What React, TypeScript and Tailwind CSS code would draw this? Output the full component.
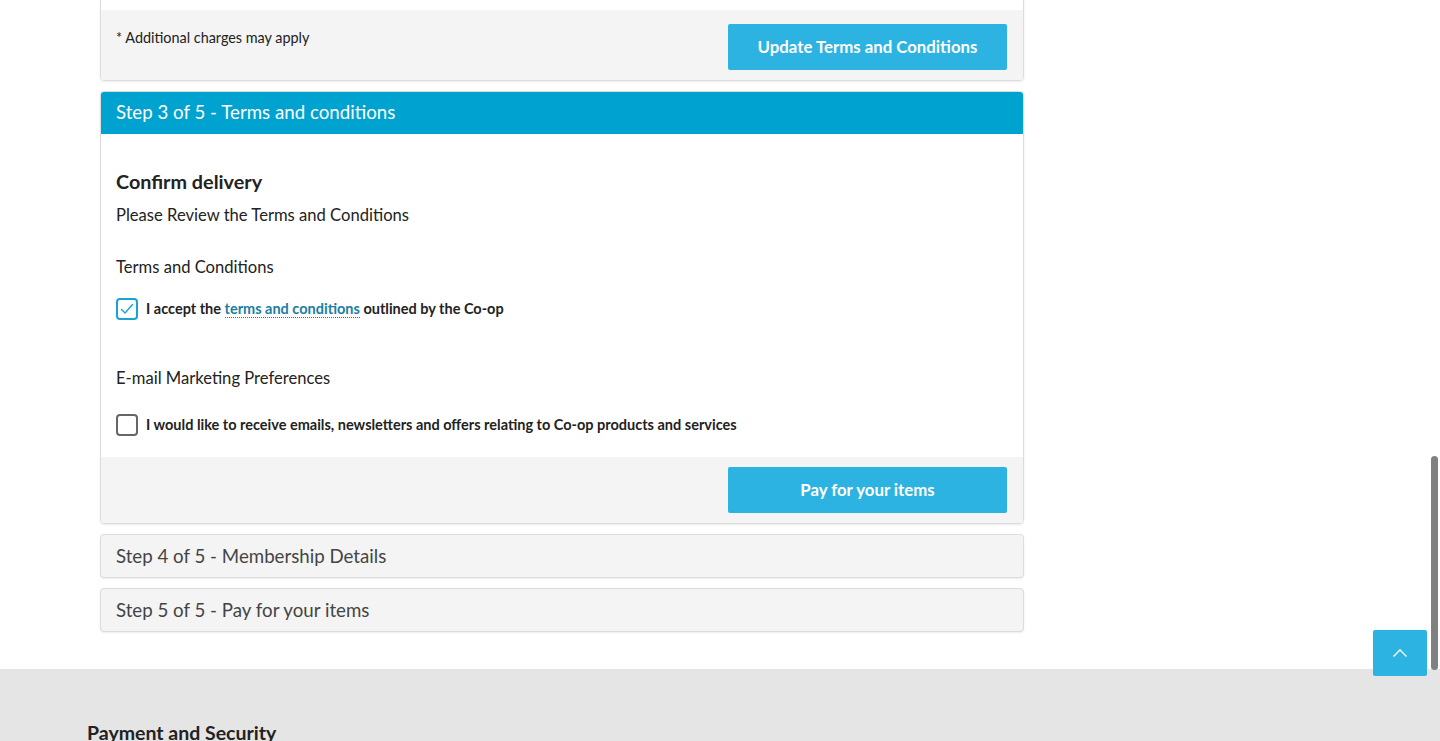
import React from "react";

const font = { fontFamily: "Lato, 'Noto Sans', sans-serif" };

function Checkbox({ checked }: { checked: boolean }) {
  return (
    <span
      className={`flex h-[22px] w-[22px] shrink-0 items-center justify-center rounded-[4px] border-2 bg-white ${
        checked ? "border-[#1aa3d1]" : "border-[#666]"
      }`}
    >
      {checked && (
        <svg width="16" height="16" viewBox="0 0 16 16" fill="none">
          <path d="M2.5 8.5 L6 12 L13.5 3.5" stroke="#1aa3d1" strokeWidth="1.4" strokeLinecap="round" strokeLinejoin="round" />
        </svg>
      )}
    </span>
  );
}

export default function App() {
  return (
    <div className="relative h-[741px] w-[1440px] overflow-hidden bg-white text-[#222]" style={font}>
      <div className="ml-[100px] w-[924px] pt-0">
        {/* previous card footer */}
        <div className="-mt-[10px] overflow-hidden rounded-b-[4px] border border-[#dcdcdc] shadow-[0_1px_2px_rgba(0,0,0,0.08)]">
          <div className="h-[19px] bg-white" />
          <div className="flex items-start justify-between bg-[#f4f4f4] pl-[15px] pr-[16px] pt-[14px] pb-[10px]">
            <p className="pt-[3px] text-[14.4px] text-[#222]">* Additional charges may apply</p>
            <button className="h-[46px] w-[279px] rounded-[2px] bg-[#2cb3e1] text-[16.8px] font-bold text-white">
              Update Terms and Conditions
            </button>
          </div>
        </div>

        {/* step 3 */}
        <div className="mt-[10px] overflow-hidden rounded-[4px] border border-[#dcdcdc] shadow-[0_1px_2px_rgba(0,0,0,0.08)]">
          <div className="flex h-[42px] items-center bg-[#00a2cf] px-[15px] pb-[1px] text-[18.7px] text-white">
            Step 3 of 5 - Terms and conditions
          </div>
          <div className="bg-white px-[15px] pt-[35px] pb-[21px]">
            <h2 className="text-[19.8px] font-bold leading-[24px] text-[#222]">Confirm delivery</h2>
            <p className="mt-[12px] text-[16.6px] leading-[20px]">Please Review the Terms and Conditions</p>
            <p className="mt-[32px] text-[16.6px] leading-[20px]">Terms and Conditions</p>
            <label className="mt-[21px] flex items-center gap-[8px] text-[14.5px] font-bold">
              <Checkbox checked />
              <span>
                I accept the{" "}
                <a className="border-b border-dotted border-[#1c7fa0] text-[#1a7ea3]">terms and conditions</a> outlined
                by the Co-op
              </span>
            </label>
            <p className="mt-[48px] text-[16.6px] leading-[20px]">E-mail Marketing Preferences</p>
            <label className="mt-[26px] flex items-center gap-[8px] text-[14.5px] font-bold">
              <Checkbox checked={false} />
              <span>I would like to receive emails, newsletters and offers relating to Co-op products and services</span>
            </label>
          </div>
          <div className="flex justify-end bg-[#f4f4f4] px-[16px] pt-[10px] pb-[10px]">
            <button className="h-[46px] w-[279px] rounded-[2px] bg-[#2cb3e1] text-[16.8px] font-bold text-white">
              Pay for your items
            </button>
          </div>
        </div>

        <div className="mt-[10px] flex h-[44px] items-center rounded-[4px] border border-[#dcdcdc] bg-[#f4f4f4] px-[15px] text-[18.7px] text-[#444] shadow-[0_1px_2px_rgba(0,0,0,0.08)]">
          Step 4 of 5 - Membership Details
        </div>
        <div className="mt-[10px] flex h-[44px] items-center rounded-[4px] border border-[#dcdcdc] bg-[#f4f4f4] px-[15px] text-[18.7px] text-[#444] shadow-[0_1px_2px_rgba(0,0,0,0.08)]">
          Step 5 of 5 - Pay for your items
        </div>
      </div>

      <footer className="mt-[37px] h-[200px] bg-[#e5e5e5] px-[87px] pt-[49px]">
        <h3 className="text-[19.5px] font-bold text-[#222]">Payment and Security</h3>
      </footer>

      {/* scroll to top */}
      <button className="absolute left-[1373px] top-[630px] flex h-[46px] w-[54px] items-center justify-center rounded-[2px] bg-[#2cb3e1]">
        <svg width="16" height="10" viewBox="0 0 16 10" fill="none">
          <path d="M1.5 8.5 L8 2 L14.5 8.5" stroke="white" strokeWidth="1.3" />
        </svg>
      </button>

      {/* scrollbar */}
      <div className="absolute left-[1431px] top-[456px] h-[214px] w-[7px] rounded-full bg-[#808080]" />
    </div>
  );
}
